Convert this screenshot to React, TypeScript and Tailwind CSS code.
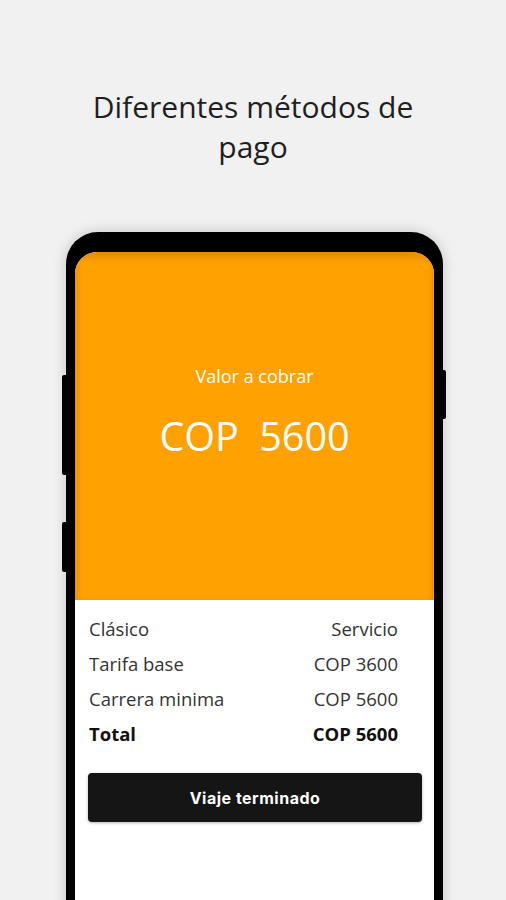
import React from "react"

const rows = [
  { label: "Clásico", value: "Servicio" },
  { label: "Tarifa base", value: "COP 3600" },
  { label: "Carrera minima", value: "COP 5600" },
]

export default function App() {
  return (
    <div className="h-[900px] w-[506px] overflow-hidden bg-[#f1f1f1] flex flex-col font-['Open_Sans',sans-serif]">
      {/* Heading */}
      <h1 className="pt-[87px] text-center text-[30px] leading-[40px] text-[#1f1f1f]">
        Diferentes métodos de
        <br />
        pago
      </h1>

      {/* Phone */}
      <div className="relative mt-[65px] ml-[66px] w-[377px] h-[700px] shrink-0 rounded-t-[32px] bg-black pt-[20px] px-[9px] shadow-[0_0_14px_rgba(0,0,0,0.18)]">
        {/* side buttons */}
        <span className="absolute left-[-4px] top-[143px] h-[100px] w-[4px] rounded-l-[2px] bg-black" />
        <span className="absolute left-[-4px] top-[290px] h-[50px] w-[4px] rounded-l-[2px] bg-black" />
        <span className="absolute right-[-3px] top-[138px] h-[49px] w-[3px] rounded-r-[2px] bg-black" />

        <div className="h-full rounded-t-[22px] overflow-hidden bg-white flex flex-col">
          {/* Amount */}
          <div className="h-[348px] shrink-0 bg-[#ffa101] shadow-[inset_0_4px_8px_rgba(0,0,0,0.16)] flex flex-col items-center pt-[112px] text-white">
            <p className="text-[18px] leading-[24px]">Valor a cobrar</p>
            <p className="mt-[24px] text-[39.5px] leading-[48px] whitespace-pre">COP  5600</p>
          </div>

          {/* Details */}
          <div className="pt-[11px] pl-[14px] pr-[36px] text-[18.5px] leading-[35px] text-[#333]">
            {rows.map((r) => (
              <div key={r.label} className="flex justify-between">
                <span>{r.label}</span>
                <span>{r.value}</span>
              </div>
            ))}
            <div className="flex justify-between font-bold text-[#111]">
              <span>Total</span>
              <span>COP 5600</span>
            </div>
          </div>

          <div className="pl-[13px] pr-[12px] mt-[22px]">
            <button className="w-full h-[49px] rounded-[4px] bg-[#151515] text-white text-[16px] tracking-[0.5px] font-bold font-['Inter',sans-serif] shadow-[0_1px_3px_rgba(0,0,0,0.3)]">
              Viaje terminado
            </button>
          </div>
        </div>
      </div>
    </div>
  )
}
